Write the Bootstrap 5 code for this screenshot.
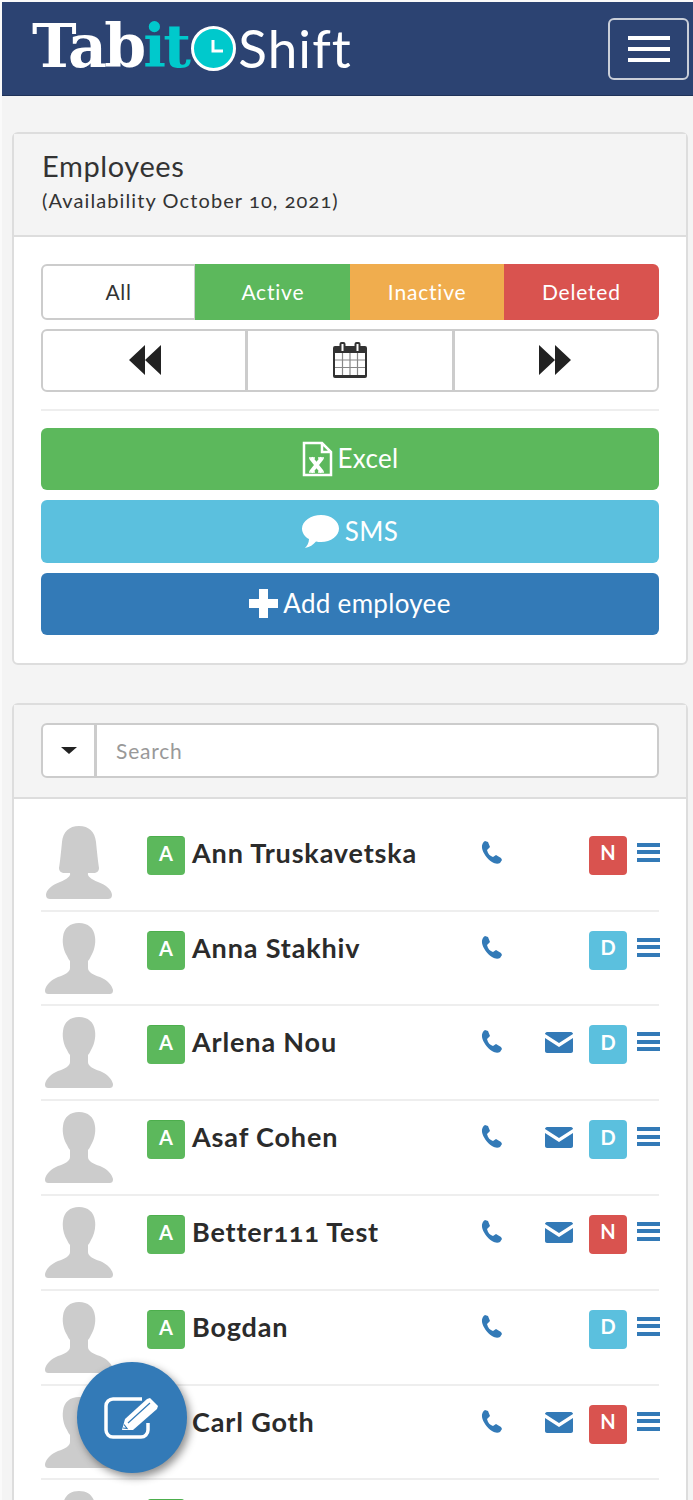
<!DOCTYPE html>
<html lang="en">
<head>
  <meta charset="UTF-8" />
  <meta name="viewport" content="width=device-width, initial-scale=1" />
  <title>Employees</title>
  <link href="https://cdn.jsdelivr.net/npm/bootstrap@5.3.3/dist/css/bootstrap.min.css" rel="stylesheet" />
  <style>
    html, body { height: 1500px; overflow: hidden; }
    body { background: #f4f4f4; color: #333; font-family: "Lato", "Noto Sans", sans-serif; border-left: 2px solid #fafafa; border-top: 2px solid #fafafa; font-variant-numeric: oldstyle-nums; }
    .top-bar { background: #2c4372; height: 94px; padding: 0 4px 0 30px; border-bottom: 1px solid #1f3258; }
    .logo-wrap { line-height: 1; text-decoration: none; }
    .logo-tab { font-family: "DejaVu Serif", serif; font-weight: 700; font-size: 60px; color: #fff; letter-spacing: -2.8px; margin-top: -6px; }
    .logo-tab span { color: #00c9cc; }
    .logo-clock { width: 45px; height: 45px; margin: 0 2px 0 3px; }
    .logo-shift { font-family: "Lato", sans-serif; font-weight: 400; font-size: 53px; color: #fff; letter-spacing: 1.1px; margin-top: -2px; }
    .menu-btn { width: 81px; height: 62px; border: 2px solid #c9ced8; border-radius: 6px; padding: 0; display: flex; flex-direction: column; justify-content: center; align-items: center; gap: 7px; }
    .menu-btn i { display: block; width: 42px; height: 4px; background: #fff; }
    .emp-card { margin: 36px 5px 38px 10px; border: 2px solid #ddd; border-radius: 6px; background: #fff; --bs-card-inner-border-radius: 4px; }
    .emp-head { background: #f4f4f4; border-bottom: 2px solid #ddd; padding: 15px 28px 23px; line-height: 1.2; }
    .emp-title { font-size: 29px; font-weight: 400; letter-spacing: .6px; }
    .emp-sub { font-size: 20px; margin-top: 4px; letter-spacing: 1.1px; }
    .emp-body { padding: 27px 27px 28px; }
    .seg-group { margin-bottom: 9px; }
    .seg-group > .seg-btn { flex: 1 1 25%; min-width: 0; height: 56px; font-size: 21px; letter-spacing: .8px; padding: 0; display: flex; align-items: center; justify-content: center; border-width: 0; }
    .seg-group > .seg-all { background: #fff; color: #333; border: 2px solid #ccc; }
    .nav-btn { height: 63px; background: #fff; border: 2px solid #ccc; padding: 0; display: flex; align-items: center; justify-content: center; }
    .emp-rule { margin: 17px 0; border-top: 2px solid #eee; opacity: 1; }
    .act-btn { height: 62px; font-size: 26px; letter-spacing: .3px; color: #fff; display: flex; align-items: center; justify-content: center; gap: 5px; border-radius: 6px; padding: 0; margin-bottom: 10px; border-width: 0; }
    .act-btn:last-child { margin-bottom: 0; }
    .bg-ok { background: #5cb85c; }
    .bg-sms { background: #5bc0de; height: 63px; }
    .bg-add { background: #337ab7; }
    .bg-wait { background: #f0ad4e; }
    .bg-gone { background: #d9534f; }
    .search-head { padding: 18px 27px 19px; }
    .search-drop { width: 55px; background: #fff; border: 2px solid #ccc; padding: 0; display: flex; align-items: center; justify-content: center; }
    .search-drop i { border-top: 7px solid #222; border-left: 8px solid transparent; border-right: 8px solid transparent; }
    .search-box { height: 55px; border: 2px solid #ccc; font-size: 21px; letter-spacing: .8px; padding: 0 19px; }
    .search-box::placeholder { color: #999; }
    .emp-list { padding: 18px 27px 0; }
    .emp-row { height: 94.8px; border-bottom: 2px solid #eee; display: flex; align-items: flex-start; padding-top: 9px; }
    .emp-avatar { width: 68px; height: 74px; margin-left: 4px; flex: none; }
    .emp-state { width: 38px; height: 39px; margin: 10px 7px 0 34px; padding-bottom: 6px; background: #5cb85c; border-top: 1px solid #4cae4c; color: #fff; border-radius: 4px; font-size: 20px; font-weight: 700; display: flex; align-items: center; justify-content: center; flex: none; }
    .emp-name { font-size: 27px; font-weight: 700; color: #2b2b2b; line-height: 1; margin-top: 13px; width: 289px; flex: none; white-space: nowrap; letter-spacing: .85px; }
    .emp-tel { width: 22px; height: 23px; margin-top: 15px; flex: none; }
    .emp-mail { width: 28px; height: 21px; margin: 17px 0 0 42px; flex: none; }
    .emp-gap { width: 28px; margin-left: 42px; flex: none; }
    .emp-shift { width: 38px; height: 39px; margin: 10px 0 0 16px; padding-bottom: 6px; border-radius: 4px; color: #fff; font-size: 20px; font-weight: 700; display: flex; align-items: center; justify-content: center; flex: none; }
    .shift-n { background: #d9534f; }
    .shift-d { background: #5bc0de; }
    .emp-more { width: 23px; height: 19px; margin: 17px 0 0 10px; display: flex; flex-direction: column; justify-content: space-between; flex: none; }
    .emp-more i { display: block; height: 4px; background: #337ab7; }
    .fab-btn { position: fixed; left: 77px; top: 1362px; width: 110px; height: 111px; border-radius: 50%; background: #337ab7; border: 0; box-shadow: 3px 4px 8px rgba(0,0,0,.45); display: flex; align-items: center; justify-content: center; }
  </style>
</head>
<body>
  <svg width="0" height="0" class="position-absolute">
    <symbol id="ic-person" viewBox="0 -2 68 74"><path fill="#ccc" d="M34 0C25 0 19 5 18 14c-1 7 1 14 4 19 1 2 2 4 3 5v7c0 4-5 7-12 9C6 57 1 62 0 67c0 3 1 4 4 4h60c3 0 4-1 4-4-1-5-6-10-13-13-7-2-12-5-12-9v-7c1-1 2-3 3-5 3-5 5-12 4-19C49 5 43 0 34 0z"/></symbol>
    <symbol id="ic-woman" viewBox="0 0 68 74"><path fill="#ccc" d="M34 0C24 0 18 6 17 16c-1 10-2 20-3 26 0 3 2 5 6 5h5c1 3-3 6-10 9C7 59 1 64 1 69c0 3 2 4 4 4h58c2 0 4-1 4-4 0-5-6-10-14-13-7-3-11-6-10-9h5c4 0 6-2 6-5-1-6-2-16-3-26C50 6 44 0 34 0z"/></symbol>
    <symbol id="ic-tel" viewBox="0 0 22 23"><path fill="#337ab7" d="M4 0l3 1 2 5-3 3c1 4 3 6 6 7l3-2 5 3 1 2-2 3c-2 1-5 1-8-1C6 18 2 12 1 7 .5 4 2 1 4 0z"/></symbol>
    <symbol id="ic-mail" viewBox="0 0 28 21"><path fill="#337ab7" d="M2 0h24c1 0 2 1 2 2L14 11 0 2c0-1 1-2 2-2zM0 6l14 9 14-9v13c0 1-1 2-2 2H2c-1 0-2-1-2-2z"/></symbol>
  </svg>

  <nav class="navbar top-bar d-flex justify-content-between align-items-center flex-nowrap">
    <a class="navbar-brand d-flex align-items-center p-0 m-0 logo-wrap" href="#">
      <span class="logo-tab">Tab<span>it</span></span>
      <svg class="logo-clock" viewBox="0 0 45 45"><circle cx="22.500" cy="22.500" r="21" fill="#00c9cc" stroke="#fff" stroke-width="3"/><path d="M22 14v11h10" fill="none" stroke="#fff" stroke-width="3"/></svg>
      <span class="logo-shift">Shift</span>
    </a>
    <button class="menu-btn bg-transparent" type="button" aria-label="Menu"><i></i><i></i><i></i></button>
  </nav>

  <div class="card emp-card">
    <div class="emp-head">
      <div class="emp-title">Employees</div>
      <div class="emp-sub">(Availability October 10, 2021)</div>
    </div>
    <div class="emp-body">
      <div class="btn-group w-100 seg-group">
        <button class="btn seg-btn seg-all" type="button">All</button>
        <button class="btn seg-btn btn-success bg-ok" type="button">Active</button>
        <button class="btn seg-btn btn-warning text-white bg-wait" type="button">Inactive</button>
        <button class="btn seg-btn btn-danger bg-gone" type="button">Deleted</button>
      </div>
      <div class="btn-group w-100">
        <button class="btn nav-btn" type="button" aria-label="Previous"><svg width="33" height="30" viewBox="0 0 33 30"><path fill="#222" d="M17 0v30L1 15zM33 0v30L17 15z"/></svg></button>
        <button class="btn nav-btn" type="button" aria-label="Calendar"><svg width="34" height="36" viewBox="0 0 34 36"><path fill="#333" d="M2 4h4.500V2a2 2 0 0 1 2-2h2a2 2 0 0 1 2 2v2h9V2a2 2 0 0 1 2-2h2a2 2 0 0 1 2 2v2H32a2 2 0 0 1 2 2v28a2 2 0 0 1-2 2H2a2 2 0 0 1-2-2V6a2 2 0 0 1 2-2z"/><path fill="#fff" d="M8.500 2h2v7h-2zM23.500 2h2v7h-2z"/><path fill="#fff" d="M2 11h30v22H2z"/><path fill="none" stroke="#888" stroke-width="1.200" d="M9.500 11v22M17 11v22M24.500 11v22M2 18h30M2 25.500h30"/></svg></button>
        <button class="btn nav-btn" type="button" aria-label="Next"><svg width="33" height="30" viewBox="0 0 33 30"><path fill="#222" d="M0 0v30l16-15zM16 0v30l16-15z"/></svg></button>
      </div>
      <hr class="emp-rule" />
      <button class="btn act-btn w-100 bg-ok" type="button"><svg width="31" height="36" viewBox="0 0 31 36"><path fill="none" stroke="#fff" stroke-width="2.500" d="M2 2h18l9 9v23H2zM20 2v9h9"/><path fill="none" stroke="#fff" stroke-width="4" d="M9 17l11 14M20 17 9 31"/><path fill="none" stroke="#fff" stroke-width="1.500" d="M7 17h6M16 17h6M7 31h6M16 31h6"/></svg>Excel</button>
      <button class="btn act-btn w-100 bg-sms" type="button"><svg width="38" height="33" viewBox="0 0 38 33"><path fill="#fff" d="M19 0c10 0 18 6 18 13.500S29 27 19 27c-2 0-3 0-5-.5C11 30 8 32 3 33c2-2 4-5 4-9-4-2-7-6-7-10.500C0 6 9 0 19 0z"/></svg>SMS</button>
      <button class="btn act-btn w-100 bg-add" type="button"><svg width="29" height="29" viewBox="0 0 29 29"><path fill="#fff" d="M10 0h9v10h10v9H19v10h-9V19H0v-9h10z"/></svg>Add employee</button>
    </div>
  </div>

  <div class="card emp-card mb-0">
    <div class="emp-head search-head">
      <div class="input-group">
        <button class="btn search-drop" type="button" aria-label="Filter"><i></i></button>
        <input class="form-control search-box" type="text" placeholder="Search" />
      </div>
    </div>
    <div class="emp-list">
      <div class="emp-row"><svg class="emp-avatar"><use href="#ic-woman"/></svg><span class="emp-state">A</span><span class="emp-name">Ann Truskavetska</span><svg class="emp-tel"><use href="#ic-tel"/></svg><span class="emp-gap"></span><span class="emp-shift shift-n">N</span><span class="emp-more"><i></i><i></i><i></i></span></div>
      <div class="emp-row"><svg class="emp-avatar"><use href="#ic-person"/></svg><span class="emp-state">A</span><span class="emp-name">Anna Stakhiv</span><svg class="emp-tel"><use href="#ic-tel"/></svg><span class="emp-gap"></span><span class="emp-shift shift-d">D</span><span class="emp-more"><i></i><i></i><i></i></span></div>
      <div class="emp-row"><svg class="emp-avatar"><use href="#ic-person"/></svg><span class="emp-state">A</span><span class="emp-name">Arlena Nou</span><svg class="emp-tel"><use href="#ic-tel"/></svg><svg class="emp-mail"><use href="#ic-mail"/></svg><span class="emp-shift shift-d">D</span><span class="emp-more"><i></i><i></i><i></i></span></div>
      <div class="emp-row"><svg class="emp-avatar"><use href="#ic-person"/></svg><span class="emp-state">A</span><span class="emp-name">Asaf Cohen</span><svg class="emp-tel"><use href="#ic-tel"/></svg><svg class="emp-mail"><use href="#ic-mail"/></svg><span class="emp-shift shift-d">D</span><span class="emp-more"><i></i><i></i><i></i></span></div>
      <div class="emp-row"><svg class="emp-avatar"><use href="#ic-person"/></svg><span class="emp-state">A</span><span class="emp-name">Better111 Test</span><svg class="emp-tel"><use href="#ic-tel"/></svg><svg class="emp-mail"><use href="#ic-mail"/></svg><span class="emp-shift shift-n">N</span><span class="emp-more"><i></i><i></i><i></i></span></div>
      <div class="emp-row"><svg class="emp-avatar"><use href="#ic-person"/></svg><span class="emp-state">A</span><span class="emp-name">Bogdan</span><svg class="emp-tel"><use href="#ic-tel"/></svg><span class="emp-gap"></span><span class="emp-shift shift-d">D</span><span class="emp-more"><i></i><i></i><i></i></span></div>
      <div class="emp-row"><svg class="emp-avatar"><use href="#ic-person"/></svg><span class="emp-state invisible">A</span><span class="emp-name">Carl Goth</span><svg class="emp-tel"><use href="#ic-tel"/></svg><svg class="emp-mail"><use href="#ic-mail"/></svg><span class="emp-shift shift-n">N</span><span class="emp-more"><i></i><i></i><i></i></span></div>
      <div class="emp-row"><svg class="emp-avatar"><use href="#ic-person"/></svg><span class="emp-state"></span></div>
    </div>
  </div>

  <button class="fab-btn" type="button" aria-label="Edit">
    <svg width="56" height="42" viewBox="0 0 56 42"><path fill="none" stroke="#fff" stroke-width="3.500" stroke-linejoin="round" d="M38 2H9a7 7 0 0 0-7 7v24a7 7 0 0 0 7 7h28a7 7 0 0 0 7-7V26"/><path fill="#fff" d="M18 33l3-11L43 2l3-1 8 8-1 3-24 21z"/><path fill="none" stroke="#337ab7" stroke-width="1.200" d="M24 26 46 6M19 31l4 .5-3-4"/></svg>
  </button>
</body>
</html>
